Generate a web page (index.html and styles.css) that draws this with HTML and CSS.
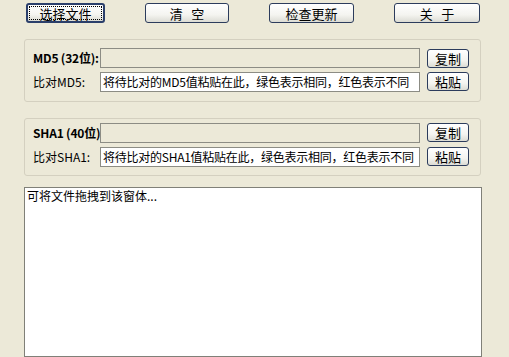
FILE: index.html
```html
<!DOCTYPE html>
<html lang="zh-CN">
<head>
<meta charset="utf-8">
<title>Hash</title>
<link rel="stylesheet" href="styles.css">
</head>
<body>
<div class="window">
  <div class="toolbar">
    <button class="btn btn-default w1"><span class="focus">选择文件</span></button>
    <button class="btn w2">清&nbsp;&nbsp;&nbsp;空</button>
    <button class="btn w3">检查更新</button>
    <button class="btn w4">关&nbsp;&nbsp;&nbsp;于</button>
  </div>

  <div class="group group-md5">
    <div class="label bold">MD5 (32位):</div>
    <div class="field readonly"></div>
    <button class="btn small">复制</button>
    <div class="label">比对MD5:</div>
    <div class="field">将待比对的MD5值粘贴在此，绿色表示相同，红色表示不同</div>
    <button class="btn small">粘贴</button>
  </div>

  <div class="group group-sha">
    <div class="label bold">SHA1 (40位)</div>
    <div class="field readonly"></div>
    <button class="btn small">复制</button>
    <div class="label">比对SHA1:</div>
    <div class="field">将待比对的SHA1值粘贴在此，绿色表示相同，红色表示不同</div>
    <button class="btn small">粘贴</button>
  </div>

  <div class="drop">可将文件拖拽到该窗体...</div>
</div>
</body>
</html>
```

FILE: styles.css
```css
* { box-sizing: border-box; }
html, body {
  margin: 0;
  padding: 0;
  background: #ECE9D8;
  width: 509px;
  height: 357px;
  overflow: hidden;
}
.window {
  font-family: "Noto Sans CJK SC", "DejaVu Sans", sans-serif;
  font-size: 12px;
  color: #000;
  display: flex;
  flex-direction: column;
}
.toolbar {
  display: flex;
  gap: 40px;
  padding: 3px 0 0 26px;
  height: 39px;
}
.btn {
  font-family: "Noto Sans CJK SC", "DejaVu Sans", sans-serif;
  font-size: 13px;
  line-height: 1;
  color: #000;
  height: 20px;
  padding: 0;
  border: 1px solid #2C3C5C;
  border-radius: 3px;
  background: linear-gradient(#FFFFFF 0%, #F4F4F0 60%, #DCDCD4 100%);
  display: flex;
  align-items: center;
  justify-content: center;
}
.w1 { width: 79px; }
.w2 { width: 84px; }
.w3 { width: 85px; }
.w4 { width: 86px; }
.btn-default {
  border: 2px solid #2B3F6B;
  padding: 1px;
}
.focus {
  display: flex;
  align-items: center;
  justify-content: center;
  width: 100%;
  height: 100%;
  border: 1px dotted #000;
}
.group {
  margin-left: 24px;
  width: 457px;
  border: 1px solid #D4D0C0;
  border-radius: 3px;
  display: grid;
  grid-template-columns: 67px 327px 42px;
  column-gap: 0;
  row-gap: 3px;
  padding-left: 8px;
  align-items: center;
}
.group-md5 { padding-top: 8px; padding-bottom: 9px; height: 63px; }
.group-sha { margin-top: 16px; padding-top: 3px; padding-bottom: 8px; height: 58px; }
.label { white-space: nowrap; line-height: 20px; }
.bold { font-weight: bold; letter-spacing: -0.2px; }
.field {
  width: 320px;
  height: 20px;
  border: 1px solid #8C8C84;
  background: #FFFFFF;
  padding: 0 2px;
  line-height: 18px;
  white-space: nowrap;
  overflow: hidden;
  letter-spacing: -0.25px;
}
.field.readonly { background: #ECE9D8; }
.btn.small {
  width: 42px;
  height: 19px;
  font-size: 13px;
}
.drop {
  margin-top: 11px;
  margin-left: 24px;
  width: 458px;
  height: 170px;
  border: 1px solid #808078;
  background: #FFFFFF;
  padding: 0 2px;
  line-height: 16px;
}
```
